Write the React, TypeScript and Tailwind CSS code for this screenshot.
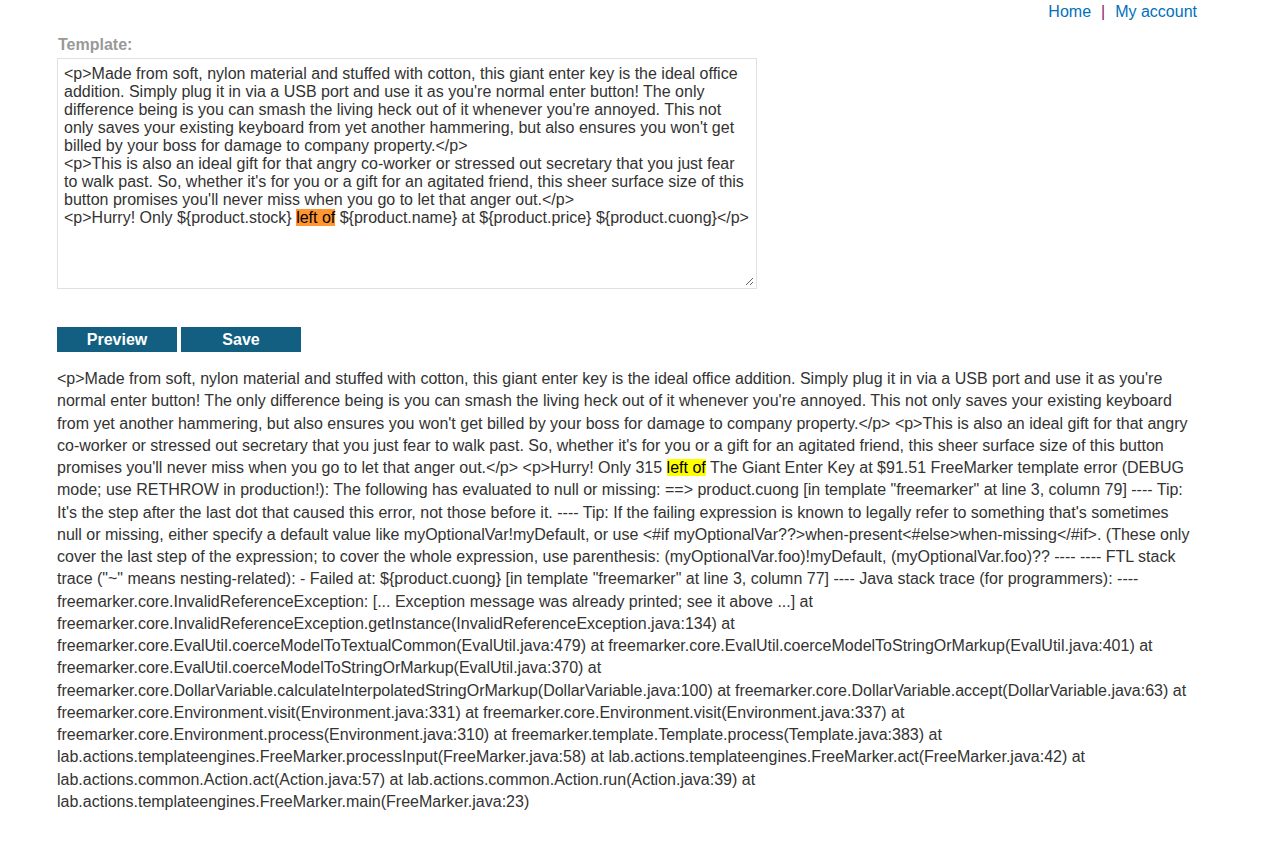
import React from "react";

const tpl1 =
  "<p>Made from soft, nylon material and stuffed with cotton, this giant enter key is the ideal office addition. Simply plug it in via a USB port and use it as you're normal enter button! The only difference being is you can smash the living heck out of it whenever you're annoyed. This not only saves your existing keyboard from yet another hammering, but also ensures you won't get billed by your boss for damage to company property.</p>";
const tpl2 =
  "<p>This is also an ideal gift for that angry co-worker or stressed out secretary that you just fear to walk past. So, whether it's for you or a gift for an agitated friend, this sheer surface size of this button promises you'll never miss when you go to let that anger out.</p>";

const out1 =
  "<p>Made from soft, nylon material and stuffed with cotton, this giant enter key is the ideal office addition. Simply plug it in via a USB port and use it as you're normal enter button! The only difference being is you can smash the living heck out of it whenever you're annoyed. This not only saves your existing keyboard from yet another hammering, but also ensures you won't get billed by your boss for damage to company property.</p> <p>This is also an ideal gift for that angry co-worker or stressed out secretary that you just fear to walk past. So, whether it's for you or a gift for an agitated friend, this sheer surface size of this button promises you'll never miss when you go to let that anger out.</p> <p>Hurry! Only 315 ";
const out2 =
  ' The Giant Enter Key at $91.51 FreeMarker template error (DEBUG mode; use RETHROW in production!): The following has evaluated to null or missing: ==> product.cuong [in template "freemarker" at line 3, column 79] ---- Tip: It\'s the step after the last dot that caused this error, not those before it. ---- Tip: If the failing expression is known to legally refer to something that\'s sometimes null or missing, either specify a default value like myOptionalVar!myDefault, or use <#if myOptionalVar??>when-present<#else>when-missing</#if>. (These only cover the last step of the expression; to cover the whole expression, use parenthesis: (myOptionalVar.foo)!myDefault, (myOptionalVar.foo)?? ---- ---- FTL stack trace ("~" means nesting-related): - Failed at: ${product.cuong} [in template "freemarker" at line 3, column 77] ---- Java stack trace (for programmers): ---- freemarker.core.InvalidReferenceException: [... Exception message was already printed; see it above ...] at freemarker.core.InvalidReferenceException.getInstance(InvalidReferenceException.java:134) at freemarker.core.EvalUtil.coerceModelToTextualCommon(EvalUtil.java:479) at freemarker.core.EvalUtil.coerceModelToStringOrMarkup(EvalUtil.java:401) at freemarker.core.EvalUtil.coerceModelToStringOrMarkup(EvalUtil.java:370) at freemarker.core.DollarVariable.calculateInterpolatedStringOrMarkup(DollarVariable.java:100) at freemarker.core.DollarVariable.accept(DollarVariable.java:63) at freemarker.core.Environment.visit(Environment.java:331) at freemarker.core.Environment.visit(Environment.java:337) at freemarker.core.Environment.process(Environment.java:310) at freemarker.template.Template.process(Template.java:383) at lab.actions.templateengines.FreeMarker.processInput(FreeMarker.java:58) at lab.actions.templateengines.FreeMarker.act(FreeMarker.java:42) at lab.actions.common.Action.act(Action.java:57) at lab.actions.common.Action.run(Action.java:39) at lab.actions.templateengines.FreeMarker.main(FreeMarker.java:23)';

export default function App() {
  return (
    <div
      className="min-h-[843px] bg-white text-[#333332]"
      style={{ fontFamily: '"Liberation Sans", Arial, sans-serif' }}
    >
      <div className="pl-[57px] w-[1194px]">
        <div className="flex justify-end h-[25px] pt-[3px] mr-[-3px] text-[16px] leading-[18px]">
          <span className="text-[#0071bc]">Home</span>
          <span className="px-[10px] text-[#8b1f5f]">|</span>
          <span className="text-[#0071bc]">My account</span>
        </div>
        <div className="pt-[11px] text-[16px] font-bold text-[#999999] leading-[18px] pl-[1px]">
          Template:
        </div>
        <div className="relative mt-[4px] w-[700px] h-[231px] border border-[#e0e0e0] pt-[6px] pl-[6px] pr-[6px] text-[16px] leading-[18px]">
          <div>{tpl1}</div>
          <div>{tpl2}</div>
          <div>
            {"<p>Hurry! Only ${product.stock} "}
            <span className="bg-[#ff9632] text-black">left of</span>
            {" ${product.name} at ${product.price} ${product.cuong}</p>"}
          </div>
          <svg className="absolute right-[2px] bottom-[2px]" width="9" height="9" viewBox="0 0 9 9">
            <line x1="1" y1="8" x2="8" y2="1" stroke="#666" strokeWidth="1" />
            <line x1="5" y1="8" x2="8" y2="5" stroke="#666" strokeWidth="1" />
          </svg>
        </div>
        <div className="flex gap-[4px] mt-[38px]">
          <div className="w-[120px] h-[25px] bg-[#125f82] text-white font-bold text-[16px] flex items-center justify-center">
            Preview
          </div>
          <div className="w-[120px] h-[25px] bg-[#125f82] text-white font-bold text-[16px] flex items-center justify-center">
            Save
          </div>
        </div>
        <div className="mt-[16px] text-[16px] leading-[22.25px]">
          {out1}
          <span className="bg-[#ffff00] text-black">left of</span>
          {out2}
        </div>
      </div>
    </div>
  );
}
